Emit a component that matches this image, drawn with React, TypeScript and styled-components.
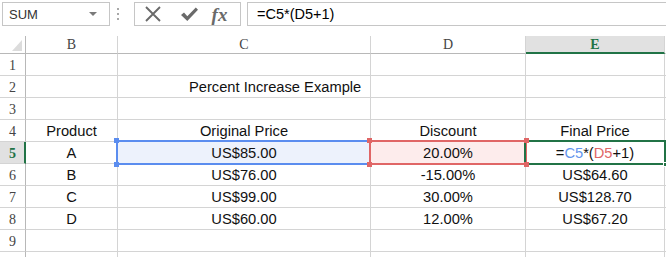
import React from "react";
import styled, { createGlobalStyle, css } from "styled-components";

const GlobalStyle = createGlobalStyle`
  html, body {
    margin: 0;
    padding: 0;
    background: #fff;
    overflow: hidden;
  }
  body {
    font-family: "Liberation Sans", Arial, sans-serif;
  }
`;

type Tone = "blue" | "red" | "green";

const toneColor: Record<Tone, string> = {
  blue: "#5b8def",
  red: "#e06666",
  green: "#217346",
};

const toneFill: Record<Tone, string> = {
  blue: "#edf2fc",
  red: "#fdecec",
  green: "transparent",
};

const columns = ["B", "C", "D", "E"];
const colWidths = [92, 253, 155, 139];

type CellData = {
  text?: React.ReactNode;
  tone?: Tone;
  handles?: ("tl" | "tr" | "bl" | "br")[];
  indent?: number;
};

const Formula = () => (
  <>
    =<Ref tone="blue">C5</Ref>*(<Ref tone="red">D5</Ref>+1)
  </>
);

const rows: CellData[][] = [
  [{}, {}, {}, {}],
  [{}, { text: "Percent Increase Example", indent: 71 }, {}, {}],
  [{}, {}, {}, {}],
  [{ text: "Product" }, { text: "Original Price" }, { text: "Discount" }, { text: "Final Price" }],
  [
    { text: "A" },
    { text: "US$85.00", tone: "blue", handles: ["tl", "bl"] },
    { text: "20.00%", tone: "red", handles: ["tl", "tr", "bl", "br"] },
    { text: <Formula />, tone: "green" },
  ],
  [{ text: "B" }, { text: "US$76.00" }, { text: "-15.00%" }, { text: "US$64.60" }],
  [{ text: "C" }, { text: "US$99.00" }, { text: "30.00%" }, { text: "US$128.70" }],
  [{ text: "D" }, { text: "US$60.00" }, { text: "12.00%" }, { text: "US$67.20" }],
  [{}, {}, {}, {}],
  [{}, {}, {}, {}],
];

// only rows 1-9 are fully on screen, the last row is cut by the window
const labelledRows = 9;

export default function App() {
  return (
    <>
      <GlobalStyle />
      <TopBar>
        <NameBox>
          <NameText>SUM</NameText>
          <DropArrow />
        </NameBox>
        <Grip>
          <span />
          <span />
          <span />
        </Grip>
        <ButtonBox>
          <IconButton>
            <svg width="18" height="18" viewBox="0 0 18 18">
              <path d="M2 2 L16 16 M16 2 L2 16" stroke="#6a6a6a" strokeWidth="1.9" fill="none" />
            </svg>
          </IconButton>
          <IconButton>
            <svg width="19" height="17" viewBox="0 0 19 17">
              <path d="M1 9 L4 6.6 L7.3 10.2 L15.8 1.5 L18 3.8 L7.3 15 Z" fill="#6a6a6a" />
            </svg>
          </IconButton>
          <FxText>fx</FxText>
        </ButtonBox>
        <FormulaInput>=C5*(D5+1)</FormulaInput>
      </TopBar>
      <Sheet>
        <Corner>
          <svg width="10" height="11" viewBox="0 0 10 11">
            <path d="M10 0 L10 11 L0 11 Z" fill="#dcdcdc" />
          </svg>
        </Corner>
        {columns.map((c) => (
          <ColHeader key={c} $active={c === "E"}>
            {c}
          </ColHeader>
        ))}
        <Filler />
        {rows.map((row, r) => (
          <React.Fragment key={r}>
            <RowHeader $active={r === 4}>{r < labelledRows ? r + 1 : ""}</RowHeader>
            {row.map((cell, c) => (
              <Cell
                key={c}
                $fill={cell.tone ? toneFill[cell.tone] : "transparent"}
                $indent={cell.indent}
              >
                {cell.text}
                {cell.tone && (
                  <Selection $tone={cell.tone}>
                    {cell.handles?.map((h) => (
                      <Handle key={h} $tone={cell.tone!} $pos={h} />
                    ))}
                    {cell.tone === "green" && <FillHandle />}
                  </Selection>
                )}
              </Cell>
            ))}
            <Filler />
          </React.Fragment>
        ))}
      </Sheet>
    </>
  );
}

const TopBar = styled.div`
  display: flex;
  align-items: flex-start;
  height: 36px;
  padding: 2px 0 0 2px;
  box-sizing: border-box;
`;

const NameBox = styled.div`
  position: relative;
  display: flex;
  align-items: center;
  width: 108px;
  height: 24px;
  box-sizing: border-box;
  border: 1px solid #c6c6c6;
  padding-left: 6px;
`;

const NameText = styled.span`
  font-size: 13px;
  color: #333;
`;

const DropArrow = styled.span`
  position: absolute;
  right: 12px;
  top: 9px;
  width: 0;
  height: 0;
  border-left: 4px solid transparent;
  border-right: 4px solid transparent;
  border-top: 4px solid #7a7a7a;
`;

const Grip = styled.div`
  width: 16px;
  height: 24px;
  display: flex;
  flex-direction: column;
  align-items: center;
  justify-content: center;
  gap: 3px;

  span {
    width: 2px;
    height: 2px;
    background: #a8a8a8;
  }
`;

const ButtonBox = styled.div`
  margin-left: 8px;
  width: 107px;
  height: 24px;
  box-sizing: border-box;
  border: 1px solid #c6c6c6;
  display: grid;
  grid-template-columns: 36px 36px 1fr;
  align-items: center;
  justify-items: center;
`;

const IconButton = styled.span`
  display: flex;
  align-items: center;
  justify-content: center;
`;

const FxText = styled.span`
  font-family: "Liberation Serif", "Times New Roman", serif;
  font-style: italic;
  font-weight: bold;
  font-size: 19px;
  color: #6a6a6a;
  line-height: 1;
  margin-right: 8px;
`;

const FormulaInput = styled.div`
  margin-left: 6px;
  flex: 1;
  height: 24px;
  box-sizing: border-box;
  border: 1px solid #c6c6c6;
  border-right: none;
  padding-left: 9px;
  display: flex;
  align-items: center;
  font-size: 14.5px;
  color: #000;
`;

const Sheet = styled.div`
  display: grid;
  grid-template-columns: 26px ${colWidths.map((w) => `${w}px`).join(" ")} 1fr;
  grid-template-rows: 18px repeat(10, 22px);
`;

const headerFont = css`
  font-family: "Liberation Serif", "Times New Roman", serif;
  font-size: 14px;
  color: #444;
`;

const Corner = styled.div`
  box-sizing: border-box;
  border-right: 1px solid #b8b8b8;
  border-bottom: 1px solid #b8b8b8;
  display: flex;
  align-items: flex-end;
  justify-content: flex-end;
  padding: 0 3px 2px 0;
`;

const ColHeader = styled.div<{ $active?: boolean }>`
  ${headerFont};
  box-sizing: border-box;
  border-right: 1px solid #d4d4d4;
  border-bottom: 1px solid #b8b8b8;
  display: flex;
  align-items: center;
  justify-content: center;
  padding-top: 1px;

  ${(p) =>
    p.$active &&
    css`
      background: #e1e1e1;
      border-bottom: 2px solid #217346;
      color: #217346;
      font-weight: bold;
    `}
`;

const RowHeader = styled.div<{ $active?: boolean }>`
  ${headerFont};
  box-sizing: border-box;
  border-right: 1px solid #b8b8b8;
  border-bottom: 1px solid #d4d4d4;
  display: flex;
  align-items: center;
  justify-content: center;
  padding-top: 2px;

  ${(p) =>
    p.$active &&
    css`
      background: #e1e1e1;
      border-right: 2px solid #217346;
      padding-left: 1px;
      color: #217346;
      font-weight: bold;
    `}
`;

const Cell = styled.div<{ $fill: string; $indent?: number }>`
  position: relative;
  box-sizing: border-box;
  border-right: 1px solid #d4d4d4;
  border-bottom: 1px solid #d4d4d4;
  background: ${(p) => p.$fill};
  display: flex;
  align-items: center;
  justify-content: ${(p) => (p.$indent ? "flex-start" : "center")};
  padding-left: ${(p) => p.$indent ?? 0}px;
  padding-top: 1px;
  white-space: nowrap;
  font-size: 14.7px;
  color: #111;
`;

const Filler = styled.div`
  box-sizing: border-box;
  border-bottom: 1px solid #d4d4d4;
`;

const Ref = styled.span<{ tone: Tone }>`
  color: ${(p) => (p.tone === "blue" ? "#6495ed" : "#e06666")};
`;

const Selection = styled.div<{ $tone: Tone }>`
  position: absolute;
  top: -2px;
  left: -2px;
  right: -2px;
  bottom: -2px;
  border: 2px solid ${(p) => toneColor[p.$tone]};
  pointer-events: none;
`;

const Handle = styled.span<{ $tone: Tone; $pos: "tl" | "tr" | "bl" | "br" }>`
  position: absolute;
  z-index: 2;
  width: 5px;
  height: 5px;
  background: ${(p) => toneColor[p.$tone]};
  ${(p) => (p.$pos[0] === "t" ? "top: -4px;" : "bottom: -4px;")}
  ${(p) => (p.$pos[1] === "l" ? "left: -4px;" : "right: -4px;")}
`;

const FillHandle = styled.span`
  position: absolute;
  z-index: 2;
  right: -4px;
  bottom: -4px;
  width: 5px;
  height: 5px;
  background: #217346;
  border: 1px solid #fff;
  box-sizing: border-box;
`;
